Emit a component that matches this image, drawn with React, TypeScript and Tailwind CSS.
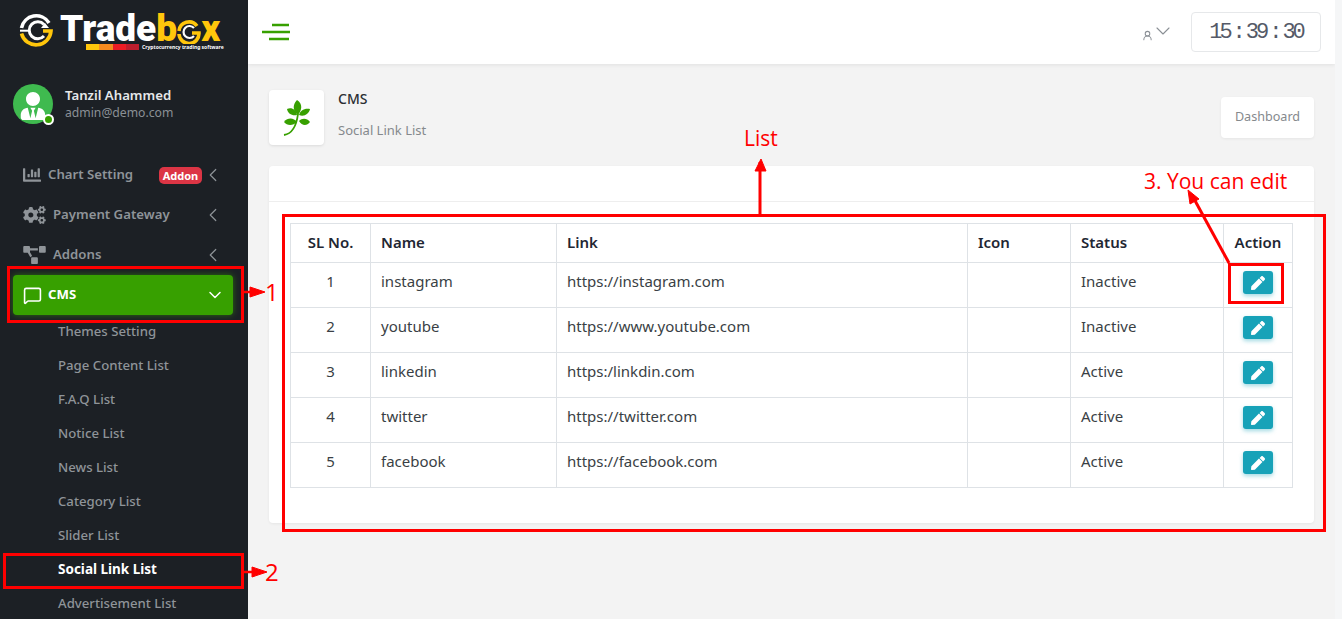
import { ChevronDown, ChevronLeft, MessageSquare, UserRound } from "lucide-react";
import { FaChartBar, FaCogs, FaPen, FaProjectDiagram, FaUserTie } from "react-icons/fa";

const subItems = [
  "Themes Setting",
  "Page Content List",
  "F.A.Q List",
  "Notice List",
  "News List",
  "Category List",
  "Slider List",
  "Social Link List",
  "Advertisement List",
];

const rows = [
  { sl: 1, name: "instagram", link: "https://instagram.com", status: "Inactive" },
  { sl: 2, name: "youtube", link: "https://www.youtube.com", status: "Inactive" },
  { sl: 3, name: "linkedin", link: "https:/linkdin.com", status: "Active" },
  { sl: 4, name: "twitter", link: "https://twitter.com", status: "Active" },
  { sl: 5, name: "facebook", link: "https://facebook.com", status: "Active" },
];

function Logo() {
  return (
    <div className="flex flex-col items-start pl-[19px] pt-[13px] h-[84px]">
      <div className="flex items-center h-[31px]">
        <svg width="35" height="36" viewBox="0 0 35 36" fill="none" className="mt-[4px]">
          <path d="M2.5 15A15 15 0 0 1 30 10" stroke="#fff" strokeWidth="3.6" />
          <path d="M2.5 20.5A15 15 0 0 0 32 18H24" stroke="#ffc60b" strokeWidth="3.6" />
          <path d="M25 11.5A8.5 8.5 0 1 0 25 23" stroke="#fff" strokeWidth="3" />
          <path d="M1 17.7H9" stroke="#fff" strokeWidth="2" />
          <path d="M22 15l4-5 4 5z" fill="#fff" />
        </svg>
        <span className="ml-[6px] flex items-center text-[37px] leading-[31px] font-black text-white [font-family:Roboto,sans-serif]">
          Trade
          <span className="text-[#ffc60b]">b</span>
          <svg width="24" height="24" viewBox="0 0 24 24" fill="none" className="mt-[6px]">
            <path d="M2 11A10 10 0 0 1 20 6" stroke="#ffc60b" strokeWidth="3.6" />
            <path d="M2 14A10 10 0 0 0 22 13H15" stroke="#ffc60b" strokeWidth="3.6" />
            <path d="M17 8A6 6 0 1 0 17 16" stroke="#fff" strokeWidth="2.2" />
          </svg>
          <span className="text-[#ffc60b]">x</span>
        </span>
      </div>
      <div className="ml-[67px] flex items-center">
        <span className="h-[6px] w-[13px] bg-[#ffc60b]" />
        <span className="h-[6px] w-[14px] bg-[#f68b1f]" />
        <span className="h-[6px] w-[13px] bg-[#ed1c24]" />
        <span className="h-[6px] w-[13px] bg-[#be1e2d]" />
        <span className="ml-[3px] text-[5px] leading-[6px] font-bold text-white">Cryptocurrency trading software</span>
      </div>
    </div>
  );
}

function Sidebar() {
  return (
    <aside className="w-[248px] h-[619px] shrink-0 bg-[#1c2025] overflow-hidden">
      <Logo />
      <div className="flex items-center pl-[13px]">
        <div className="relative w-10 h-10 rounded-full bg-[#3fba4f] flex items-center justify-center text-white">
          <FaUserTie className="w-[26px] h-[28px] mt-1" />
          <span className="absolute right-[-1px] bottom-[-1px] w-[11px] h-[11px] rounded-full bg-[#37a000] border-2 border-white" />
        </div>
        <div className="ml-3">
          <div className="text-[13.2px] leading-[17px] font-semibold text-[#e6e8ea]">Tanzil Ahammed</div>
          <div className="text-[12.2px] leading-[17px] text-[#8b9096]">admin@demo.com</div>
        </div>
      </div>

      <nav className="mt-[31px] text-[13.2px] font-semibold text-[#8f9499]">
        <div className="flex items-center h-10 pl-[23px] pr-[24px]">
          <FaChartBar className="w-[18px] h-[18px]" />
          <span className="ml-[7px]">Chart Setting</span>
          <span className="ml-auto h-[17px] w-[43px] rounded-[5px] bg-[#dc3545] text-white text-[11px] font-bold leading-[17px] text-center">Addon</span>
          <ChevronLeft className="w-[22px] h-[22px]" strokeWidth={1.3} />
        </div>
        <div className="flex items-center h-10 pl-[23px] pr-[24px]">
          <FaCogs className="w-[23px] h-[18px]" />
          <span className="ml-[7px]">Payment Gateway</span>
          <ChevronLeft className="ml-auto w-[22px] h-[22px]" strokeWidth={1.3} />
        </div>
        <div className="flex items-center h-10 pl-[23px] pr-[24px]">
          <FaProjectDiagram className="w-[23px] h-[18px]" />
          <span className="ml-[7px]">Addons</span>
          <ChevronLeft className="ml-auto w-[22px] h-[22px]" strokeWidth={1.3} />
        </div>
        <div className="flex items-center h-10 ml-[13px] mr-[15px] pl-[10px] pr-[8px] rounded-[4px] bg-[#37a000] text-white font-bold shadow-[0_0_6px_rgba(55,160,0,0.6)]">
          <MessageSquare className="w-[19px] h-[19px]" />
          <span className="ml-[6px]">CMS</span>
          <ChevronDown className="ml-auto w-[20px] h-[20px]" strokeWidth={1.8} />
        </div>
        <ul className="mt-[-1px]">
          {subItems.map((item) => (
            <li
              key={item}
              className={`h-[34px] pl-[58px] leading-[34px] ${item === "Social Link List" ? "text-white font-bold text-[13.5px]" : "font-medium"}`}
            >
              {item}
            </li>
          ))}
        </ul>
      </nav>
    </aside>
  );
}

function Header() {
  return (
    <header className="h-[64px] bg-white shadow-[0_1px_4px_rgba(0,0,0,0.08)] flex items-center pl-[14px] pr-[14px]">
      <svg width="28" height="18" viewBox="0 0 28 18" stroke="#37a000" strokeWidth="2.4">
        <path d="M10 2h17M0 9h28M7 16h20" />
      </svg>
      <div className="ml-auto flex items-center text-[#8a8f95]">
        <UserRound className="w-[11px] h-[11px] mt-[7px]" strokeWidth={2.2} />
        <ChevronDown className="ml-[-2px] w-[24px] h-[24px] mb-[2px]" strokeWidth={1.1} />
      </div>
      <div className="ml-[16px] w-[130px] h-[40px] rounded-[4px] border border-[#e6e8ea] flex items-center justify-center whitespace-nowrap text-[22px] tracking-[-3px] text-[#555a68] [font-family:'Liberation_Mono',monospace]">
        <span>15</span>
        <span className="px-[3px]">:</span>
        <span>39</span>
        <span className="px-[3px]">:</span>
        <span>30</span>
      </div>
    </header>
  );
}

function Main() {
  return (
    <main className="px-[21px] pt-[26px]">
      <div className="flex items-start">
        <div className="w-[55px] h-[55px] rounded-[4px] bg-white shadow-[0_1px_3px_rgba(0,0,0,0.1)] flex items-center justify-center">
          <svg width="28" height="36" viewBox="0 0 28 36" fill="#37a000">
            <path d="M14 0C20 4 19 10 15 15C10 11 9 5 14 0Z" />
            <path d="M4 9C9 7 13 10 14 15C9 16 5 14 4 9Z" />
            <path d="M27 9C21 8 17 11 16 15C21 17 26 14 27 9Z" />
            <path d="M1 22C5 17 11 18 14 22C10 26 4 26 1 22Z" />
            <path d="M27 22C24 18 19 18 16 21C19 26 24 26 27 22Z" />
            <path d="M1 35C8 34 13 29 15 14" fill="none" stroke="#37a000" strokeWidth="1.8" />
          </svg>
        </div>
        <div className="ml-[14px]">
          <div className="text-[14px] leading-[18px] font-medium text-[#2b2f33]">CMS</div>
          <div className="mt-[13px] text-[13px] leading-[18px] text-[#85898d]">Social Link List</div>
        </div>
        <div className="ml-auto mt-[7px] w-[93px] h-[41px] rounded-[4px] bg-white shadow-[0_1px_3px_rgba(0,0,0,0.06)] flex items-center justify-center text-[12.6px] text-[#85898d]">
          Dashboard
        </div>
      </div>

      <section className="mt-[21px] h-[357px] rounded-[4px] bg-white shadow-[0_1px_3px_rgba(0,0,0,0.06)]">
        <div className="h-[36px] border-b border-[#eeeeee]" />
        <div className="px-[21px] pt-[21px]">
          <table className="w-[1002px] border-collapse text-[15px] text-[#3a3f45] table-fixed">
            <colgroup>
              <col className="w-[80px]" />
              <col className="w-[186px]" />
              <col className="w-[411px]" />
              <col className="w-[103px]" />
              <col className="w-[153px]" />
              <col className="w-[69px]" />
            </colgroup>
            <thead>
              <tr className="h-[39px] text-[#1f2733] text-left">
                <th className="border border-[#dee2e6] px-[10px] pb-[1px] text-center font-semibold">SL No.</th>
                <th className="border border-[#dee2e6] px-[10px] pb-[1px] font-semibold">Name</th>
                <th className="border border-[#dee2e6] px-[10px] pb-[1px] font-semibold">Link</th>
                <th className="border border-[#dee2e6] px-[10px] pb-[1px] font-semibold">Icon</th>
                <th className="border border-[#dee2e6] px-[10px] pb-[1px] font-semibold">Status</th>
                <th className="border border-[#dee2e6] pb-[1px] text-center font-semibold">Action</th>
              </tr>
            </thead>
            <tbody>
              {rows.map((row) => (
                <tr key={row.sl} className="h-[45px]">
                  <td className="border border-[#dee2e6] text-center align-top pt-[7px]">{row.sl}</td>
                  <td className="border border-[#dee2e6] px-[10px] align-top pt-[7px]">{row.name}</td>
                  <td className="border border-[#dee2e6] px-[10px] align-top pt-[7px]">{row.link}</td>
                  <td className="border border-[#dee2e6] px-[10px]" />
                  <td className="border border-[#dee2e6] px-[10px] align-top pt-[7px]">{row.status}</td>
                  <td className="border border-[#dee2e6] align-top pt-[8px]">
                    <div className="mx-auto w-[30px] h-[23px] rounded-[3px] bg-[#17a2b8] text-white flex items-center justify-center shadow-[0_2px_4px_rgba(23,162,184,0.4)]">
                      <FaPen className="w-[14px] h-[14px]" />
                    </div>
                  </td>
                </tr>
              ))}
            </tbody>
          </table>
        </div>
      </section>
    </main>
  );
}

function Annotations() {
  return (
    <>
      <div className="absolute left-[7px] top-[266px] w-[237px] h-[57px] border-[3px] border-[#ff0000]" />
      <div className="absolute left-[3px] top-[553px] w-[241px] h-[36px] border-[3px] border-[#ff0000]" />
      <div className="absolute left-[282px] top-[214px] w-[1044px] h-[318px] border-[3px] border-[#ff0000]" />
      <div className="absolute left-[1228px] top-[263px] w-[56px] h-[41px] border-[3px] border-[#ff0000]" />
      <svg className="absolute left-0 top-0 pointer-events-none" width="1342" height="619" fill="#ff0000" stroke="#ff0000">
        <path d="M244 292h14" strokeWidth="2.5" />
        <path d="M250 287l15 5-15 5z" />
        <path d="M244 572h14" strokeWidth="2.5" />
        <path d="M252 567l15 5-15 5z" />
        <path d="M760 214V162" strokeWidth="3" />
        <path d="M755 171l6-12 5 12z" />
        <path d="M1229 263l-36-66" strokeWidth="3" />
        <path d="M1188 190l2 14 9-5z" />
      </svg>
      <span className="absolute left-[265px] top-[278px] text-[24px] leading-[28px] text-[#ff0000] [font-family:'Open_Sans',sans-serif]">1</span>
      <span className="absolute left-[265px] top-[558px] text-[24px] leading-[28px] text-[#ff0000] [font-family:'Open_Sans',sans-serif]">2</span>
      <span className="absolute left-[744px] top-[124px] text-[21px] leading-[28px] text-[#ff0000] [font-family:'Open_Sans',sans-serif]">List</span>
      <span className="absolute left-[1144px] top-[167px] text-[21px] leading-[28px] text-[#ff0000] [font-family:'Open_Sans',sans-serif]">3. You can edit</span>
    </>
  );
}

export default function App() {
  return (
    <div className="relative w-[1342px] h-[619px] overflow-hidden flex bg-[#f3f3f3] [font-family:'Noto_Sans',sans-serif]">
      <Sidebar />
      <div className="flex-1 min-w-0">
        <Header />
        <Main />
      </div>
      <div className="w-[7px] shrink-0 bg-[#f5f6f7]" />
      <Annotations />
    </div>
  );
}
